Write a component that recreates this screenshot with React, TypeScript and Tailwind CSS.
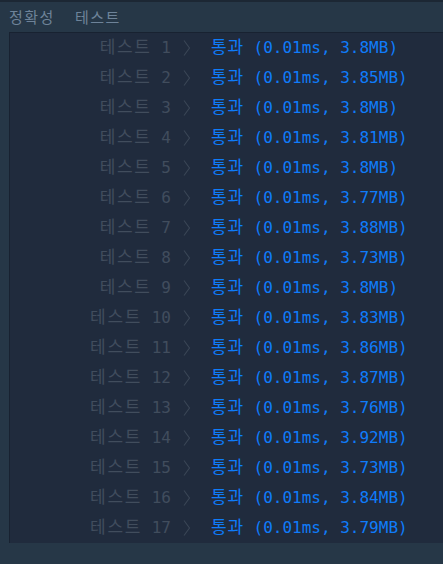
import React from 'react';

const results: [number, string][] = [
  [1, '3.8MB'],
  [2, '3.85MB'],
  [3, '3.8MB'],
  [4, '3.81MB'],
  [5, '3.8MB'],
  [6, '3.77MB'],
  [7, '3.88MB'],
  [8, '3.73MB'],
  [9, '3.8MB'],
  [10, '3.83MB'],
  [11, '3.86MB'],
  [12, '3.87MB'],
  [13, '3.76MB'],
  [14, '3.92MB'],
  [15, '3.73MB'],
  [16, '3.84MB'],
  [17, '3.79MB'],
];

function Chevron() {
  return (
    <svg width="8" height="18" viewBox="0 0 8 18" fill="none" className="shrink-0">
      <path d="M1 1.5 L6.5 9 L1 16.5" stroke="#3a4656" strokeWidth="1.1" />
    </svg>
  );
}

export default function App() {
  return (
    <div className="w-[443px] h-[564px] overflow-hidden bg-[#263747] border-t-2 border-[#1c2734] font-['Noto_Sans_CJK_KR',sans-serif]">
      <div className="h-[30px] flex items-center gap-[20px] pl-[9px] text-[15px] tracking-[1.5px] text-[#6e8399]">
        <span>정확성</span>
        <span>테스트</span>
      </div>
      <div className="ml-[9px] w-[440px] bg-[#202b3d] border-l border-t border-[#182231] font-['DejaVu_Sans_Mono','Noto_Sans_CJK_KR',monospace] text-[16px]">
        {results.map(([n, mem]) => (
          <div key={n} className="h-[30px] flex items-center">
            <div className="w-[161px] text-right text-[#414d5d] whitespace-pre">
              <span className="text-[17px] tracking-[1.7px]">테스트</span> {n}
            </div>
            <div className="ml-[12px] mr-[20px] flex items-center">
              <Chevron />
            </div>
            <div className="text-[#0f7cfa] whitespace-pre">
              <span className="text-[17px] tracking-[0.8px]">통과</span> (0.01ms, {mem})
            </div>
          </div>
        ))}
      </div>
    </div>
  );
}
